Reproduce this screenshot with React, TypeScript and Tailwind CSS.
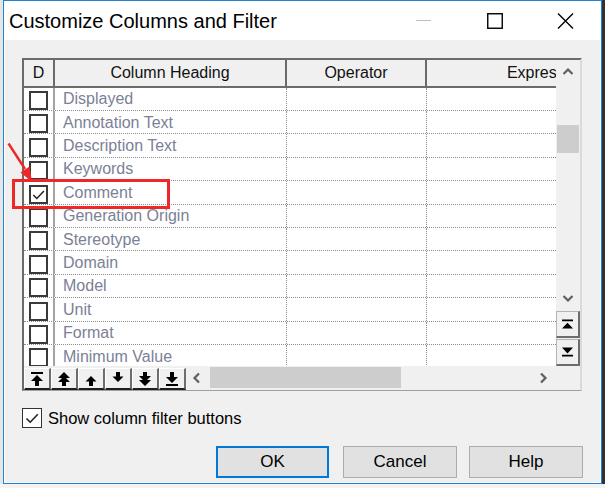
import React from "react";

const fields = [
  "Displayed",
  "Annotation Text",
  "Description Text",
  "Keywords",
  "Comment",
  "Generation Origin",
  "Stereotype",
  "Domain",
  "Model",
  "Unit",
  "Format",
  "Minimum Value",
];

const toolIcons = [
  "M0 0h12v2H0z M6 3L12 9H8V14H4V9H0z",
  "M6 0L12 6H0z M6 4L12 10H8v4H4v-4H0z",
  "M6 4L11.5 9.5H8V14H4V9.5H0.5z",
  "M6 10L11.5 4.5H8V0H4V4.5H0.5z",
  "M6 14L12 8H0z M6 10L12 4H8V0H4v4H0z",
  "M0 12h12v2H0z M6 11L12 5H8V0H4v5H0z",
];

function Tick({ size }: { size: number }) {
  return (
    <svg width={size} height={size} viewBox="0 0 16 16">
      <path d="M2.5 8.5L6.2 12.2L13.8 4.2" fill="none" stroke="#222" strokeWidth="1.6" />
    </svg>
  );
}

function Chevron({ dir }: { dir: "up" | "down" | "left" | "right" }) {
  const d = {
    up: "M1.5 7L6 2.5L10.5 7",
    down: "M1.5 3L6 7.5L10.5 3",
    left: "M7 1.5L2.5 6L7 10.5",
    right: "M3 1.5L7.5 6L3 10.5",
  }[dir];
  return (
    <svg width="12" height="12" viewBox="0 0 12 12">
      <path d={d} fill="none" stroke="#5f5f5f" strokeWidth="2.2" />
    </svg>
  );
}

function GridRow({ label, checked }: { label: string; checked: boolean }) {
  return (
    <div className="flex h-[23.4px] shrink-0 border-b border-dotted border-b-[#8c8c8c]">
      <div className="flex w-[29px] shrink-0 items-end justify-center">
        <div className="flex h-[19px] w-[19px] items-center justify-center border-2 border-[#3a3a3a] bg-white">
          {checked && <Tick size={15} />}
        </div>
      </div>
      <div className="w-[2px] shrink-0 bg-[#a3a3a3]" />
      <div className="flex w-[232px] shrink-0 items-center border-r border-dotted border-r-[#8c8c8c] pt-px pl-[8px] text-[16px] text-[#7b8196]">
        {label}
      </div>
      <div className="w-[140px] shrink-0 border-r border-dotted border-r-[#8c8c8c]" />
      <div className="flex-1" />
    </div>
  );
}

function Grid() {
  return (
    <div className="mt-[18px] flex h-[333px] w-[560px] flex-col border-t-2 border-r-2 border-b border-l-2 border-t-[#6b6b6b] border-r-[#dadada] border-b-[#a0a0a0] border-l-[#6b6b6b] bg-white">
      <div className="flex h-[306px]">
        <div className="flex w-[532px] flex-col overflow-hidden">
          <div className="flex h-[27.6px] shrink-0 border-b-2 border-[#6b6b6b] bg-[#f0f0f0] text-[16px] text-[#111]">
            <div className="flex w-[29px] shrink-0 items-center justify-center">D</div>
            <div className="w-[2px] shrink-0 bg-[#6b6b6b]" />
            <div className="flex w-[230px] shrink-0 items-center justify-center">Column Heading</div>
            <div className="w-[2px] shrink-0 bg-[#6b6b6b]" />
            <div className="flex w-[138px] shrink-0 items-center justify-center">Operator</div>
            <div className="w-[2px] shrink-0 bg-[#6b6b6b]" />
            {/* column runs on past the scrollbar, so its heading is cut as in the app */}
            <div className="flex w-[239px] shrink-0 items-center justify-center">Expression</div>
          </div>
          <div className="flex flex-1 flex-col overflow-hidden">
            {fields.map((f) => (
              <GridRow key={f} label={f} checked={f === "Comment"} />
            ))}
          </div>
        </div>
        <div className="flex w-[24px] flex-col bg-[#f0f0f0]">
          <div className="flex h-[25px] items-center justify-center">
            <Chevron dir="up" />
          </div>
          <div className="h-[202px]">
            <div className="mx-px mt-[40px] h-[28px] bg-[#cdcdcd]" />
          </div>
          <div className="flex h-[24px] items-center justify-center">
            <Chevron dir="down" />
          </div>
          <div className="flex h-[27px] items-center justify-center border-t border-r-2 border-b-2 border-l border-t-[#b4b4b4] border-r-[#6d6d6d] border-b-[#6d6d6d] border-l-[#b4b4b4]">
            <svg width="11" height="10" viewBox="0 0 12 10">
              <path d="M0 0h12v2H0z M6 3.5L12 10H0z" fill="#000" />
            </svg>
          </div>
          <div className="mt-px flex h-[27px] items-center justify-center border-t border-r-2 border-b-2 border-l border-t-[#b4b4b4] border-r-[#6d6d6d] border-b-[#6d6d6d] border-l-[#b4b4b4]">
            <svg width="11" height="10" viewBox="0 0 12 10">
              <path d="M0 0H12L6 6.5z M0 8h12v2H0z" fill="#000" />
            </svg>
          </div>
        </div>
      </div>
      <div className="flex h-[24px] bg-[#f0f0f0]">
        <div className="flex pt-[2px]">
          {toolIcons.map((d, i) => (
            <div
              key={i}
              className="flex w-[27px] items-center justify-center border-t border-r-2 border-b-2 border-l border-t-white border-r-[#6d6d6d] border-b-[#1e1e1e] border-l-white bg-[#f0f0f0]"
            >
              <svg width="12" height="14" viewBox="0 0 12 14">
                <path d={d} fill="#000" />
              </svg>
            </div>
          ))}
        </div>
        <div className="flex flex-1 pt-px pb-[2px]">
          <div className="flex w-[24px] items-center justify-center">
            <Chevron dir="left" />
          </div>
          <div className="w-[191px] bg-[#cdcdcd]" />
          <div className="flex-1" />
          <div className="flex w-[24px] items-center justify-center">
            <Chevron dir="right" />
          </div>
        </div>
        <div className="w-[24px]" />
      </div>
    </div>
  );
}

function TitleBar() {
  return (
    <div className="flex h-[39px] items-center bg-white">
      <div className="flex-1 pl-[5px] text-[20px] text-black">Customize Columns and Filter</div>
      <div className="flex h-full w-[71px] items-center justify-center">
        <div className="h-px w-[15px] bg-[#bdbdbd]" />
      </div>
      <div className="flex h-full w-[71px] items-center justify-center">
        <svg width="16" height="16" viewBox="0 0 16 16">
          <rect x="0.75" y="0.75" width="14.5" height="14.5" fill="none" stroke="#000" strokeWidth="1.4" />
        </svg>
      </div>
      <div className="flex h-full w-[71px] items-center justify-center">
        <svg width="17" height="16" viewBox="0 0 17 16">
          <path d="M1 0.5L16 15.5M16 0.5L1 15.5" stroke="#000" strokeWidth="1.4" />
        </svg>
      </div>
    </div>
  );
}

function Dialog() {
  return (
    <div className="flex w-[599px] flex-col border border-[#1e83d5] bg-white">
      <TitleBar />
      <div className="flex flex-1 flex-col border-x border-b border-white bg-[#f0f0f0] px-[17px]">
        <Grid />
        <label className="mt-[17px] flex h-[20px] items-center">
          <span className="flex h-[20px] w-[20px] items-center justify-center border border-[#333] bg-white">
            <Tick size={16} />
          </span>
          <span className="ml-[6px] text-[16.5px] text-black">Show column filter buttons</span>
        </label>
        <div className="mt-[18px] flex h-[32px] justify-end text-[17px] text-black">
          <button className="w-[113px] border-2 border-[#0078d7] bg-[#e1e1e1]">OK</button>
          <button className="ml-[14px] w-[114px] border border-[#adadad] bg-[#e1e1e1]">Cancel</button>
          <button className="ml-[12px] w-[114px] border border-[#adadad] bg-[#e1e1e1]">Help</button>
        </div>
      </div>
    </div>
  );
}

export default function App() {
  return (
    <div className="relative flex h-[488px] w-[605px] flex-col overflow-hidden bg-[#f3f3f3] font-['Liberation_Sans',Arial,sans-serif]">
      <div className="flex h-[484px]">
        <div className="w-[3px] bg-[#e6e6e6]" />
        <Dialog />
        <div className="w-[3px] bg-[#2f3338]" />
      </div>
      <div className="flex-1 bg-[#f3f3f3]" />
      {/* annotation overlay */}
      <div className="absolute top-[179px] left-[12px] h-[30px] w-[158px] border-[3px] border-[#ee2828]" />
      <svg className="absolute top-0 left-0" width="60" height="200" viewBox="0 0 60 200">
        <path d="M8.5 143.5L25 169" stroke="#ee2828" strokeWidth="2.4" />
        <path d="M32 182L20.5 172.5L29.5 166.5z" fill="#ee2828" />
      </svg>
    </div>
  );
}
